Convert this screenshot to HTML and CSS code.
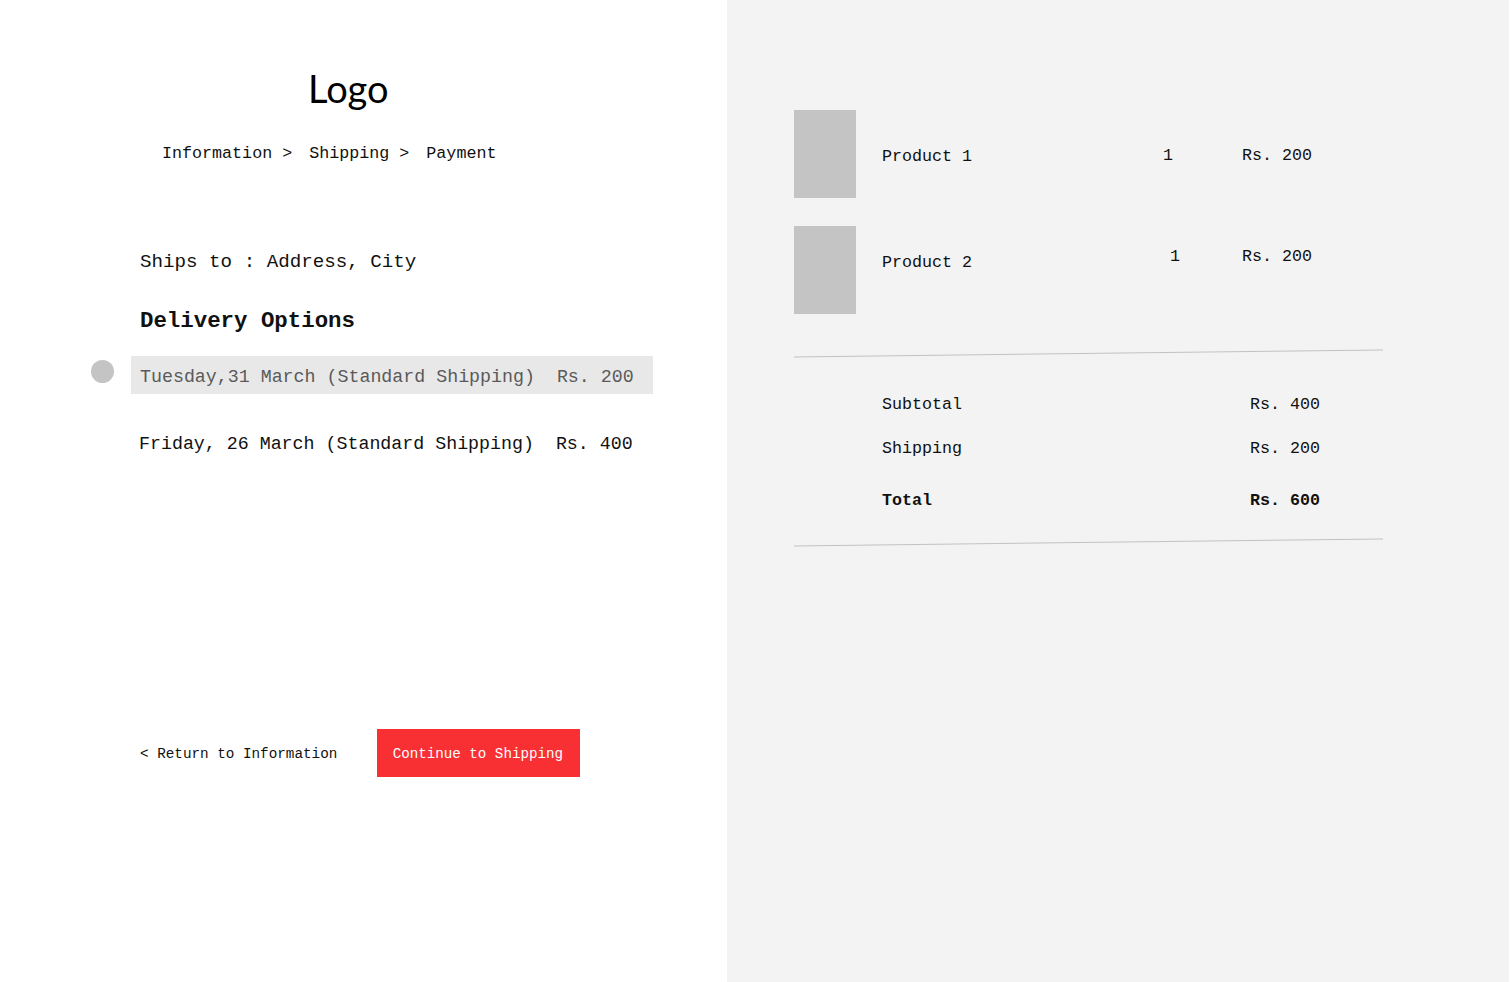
FILE: index.html
```html
<!DOCTYPE html>
<html lang="en">
<head>
<meta charset="utf-8">
<title>Checkout - Shipping</title>
<link rel="stylesheet" href="styles.css">
</head>
<body>
<div class="page">
  <main class="left">
    <div class="logo">Logo</div>
    <nav class="crumbs">
      <span class="crumb">Information &gt;</span>
      <span class="crumb">Shipping &gt;</span>
      <span class="crumb">Payment</span>
    </nav>
    <p class="ships">Ships to : Address, City</p>
    <h2 class="heading">Delivery Options</h2>
    <div class="option option-selected">
      <span class="radio"></span>
      <div class="option-box">Tuesday,31 March (Standard Shipping)  Rs. 200</div>
    </div>
    <div class="option option-plain">Friday, 26 March (Standard Shipping)  Rs. 400</div>
    <div class="actions">
      <a class="back" href="#">&lt; Return to Information</a>
      <button class="cta" type="button">Continue to Shipping</button>
    </div>
  </main>
  <aside class="right">
    <div class="product">
      <div class="thumb"></div>
      <div class="pname pname-1">Product 1</div>
      <div class="qty qty-1">1</div>
      <div class="price price-1">Rs. 200</div>
    </div>
    <div class="product">
      <div class="thumb"></div>
      <div class="pname pname-2">Product 2</div>
      <div class="qty qty-2">1</div>
      <div class="price price-2">Rs. 200</div>
    </div>
    <div class="rule rule-1"></div>
    <div class="summary">
      <div class="srow srow-sub"><span class="slabel">Subtotal</span><span class="sval">Rs. 400</span></div>
      <div class="srow srow-ship"><span class="slabel">Shipping</span><span class="sval">Rs. 200</span></div>
      <div class="srow srow-total"><span class="slabel">Total</span><span class="sval">Rs. 600</span></div>
    </div>
    <div class="rule rule-2"></div>
  </aside>
</div>
</body>
</html>
```

FILE: styles.css
```css
* { box-sizing: border-box; }
html, body { margin: 0; padding: 0; background: #ffffff; }
body {
  font-family: "Liberation Mono", "DejaVu Sans Mono", monospace;
  color: #111111;
}
.page {
  display: flex;
  height: 982px;
  overflow: hidden;
}
.left {
  width: 727px;
  flex: none;
  display: flex;
  flex-direction: column;
  background: #ffffff;
}
.logo {
  font-family: Lato, "Noto Sans", sans-serif;
  font-size: 38px;
  line-height: 40px;
  margin-top: 68px;
  padding-left: 308px;
  color: #000;
}
.crumbs {
  display: flex;
  gap: 17px;
  margin-top: 36px;
  padding-left: 162px;
  font-size: 16.7px;
  line-height: 20px;
  white-space: pre;
}
.ships {
  margin: 86px 0 0;
  padding-left: 140px;
  font-size: 19.2px;
  line-height: 24px;
  white-space: pre;
}
.heading {
  margin: 33px 0 0;
  padding-left: 140px;
  font-size: 22.4px;
  line-height: 28px;
  font-weight: 700;
}
.option { white-space: pre; font-size: 18.3px; }
.option-selected {
  display: flex;
  align-items: flex-start;
  margin-top: 21px;
  padding-left: 91px;
}
.radio {
  width: 23px;
  height: 23px;
  border-radius: 50%;
  background: #c4c4c4;
  margin-top: 4px;
  flex: none;
}
.option-box {
  margin-left: 17px;
  width: 522px;
  height: 38px;
  line-height: 42px;
  padding-left: 9px;
  background: #e8e8e8;
  color: #5a5a5a;
}
.option-plain {
  margin-top: 38px;
  padding-left: 139px;
  line-height: 24px;
}
.actions {
  display: flex;
  align-items: center;
  margin-top: 273px;
  padding-left: 140px;
}
.back {
  font-size: 14.3px;
  color: #111;
  text-decoration: none;
  white-space: pre;
  padding-top: 2px;
}
.cta {
  margin-left: 40px;
  width: 203px;
  height: 48px;
  border: 0;
  background: #f93033;
  color: #ffffff;
  font-family: "Liberation Mono", "DejaVu Sans Mono", monospace;
  font-size: 14.2px;
  padding: 2px 2px 0 0;
}
.right {
  width: 782px;
  flex: none;
  background: #f3f3f3;
  padding: 110px 0 0 67px;
  display: flex;
  flex-direction: column;
  font-size: 16.7px;
}
.product {
  display: flex;
  align-items: flex-start;
  line-height: 20px;
  white-space: pre;
}
.product + .product { margin-top: 28px; }
.thumb {
  width: 62px;
  height: 88px;
  background: #c4c4c4;
  flex: none;
}
.pname { margin-left: 26px; width: 281px; }
.qty { width: 10px; }
.price { margin-left: 69px; }
.pname-1 { margin-top: 37px; }
.qty-1, .price-1 { margin-top: 36px; }
.pname-2 { margin-top: 27px; }
.qty-2, .price-2 { margin-top: 21px; }
.qty-2 { margin-left: 7px; }
.price-2 { margin-left: 62px; }
.rule {
  width: 589px;
  height: 1px;
  background: #c2c2c2;
  transform: rotate(-0.68deg);
}
.rule-1 { margin-top: 39px; }
.rule-2 { margin-top: 31px; }
.summary {
  padding-left: 88px;
  margin-top: 41px;
}
.srow {
  display: flex;
  line-height: 20px;
  white-space: pre;
}
.slabel { width: 368px; }
.srow-ship { margin-top: 24px; }
.srow-total { margin-top: 32px; font-weight: 700; }
```
